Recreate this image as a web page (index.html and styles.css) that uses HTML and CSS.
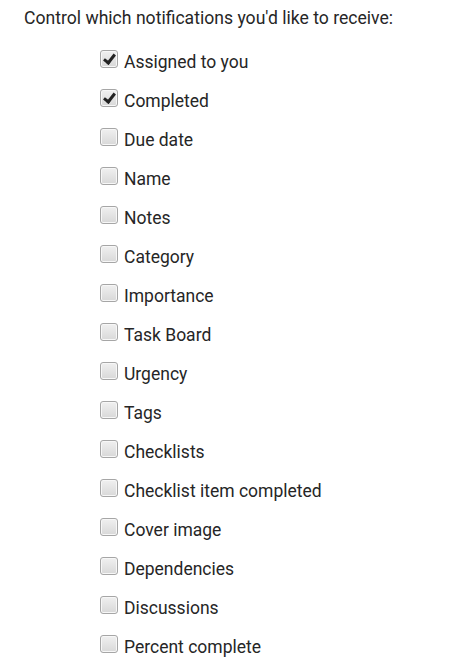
FILE: index.html
```html
<!DOCTYPE html>
<html lang="en">
<head>
    <meta charset="UTF-8">
    <meta name="viewport" content="width=device-width, initial-scale=1.0">
    <title>Notifications</title>
    <link rel="stylesheet" href="styles.css">
</head>
<body>
    <p class="intro">Control which notifications you'd like to receive:</p>
    <ul class="options">
        <li class="option"><span class="box checked"></span>Assigned to you</li>
        <li class="option"><span class="box checked"></span>Completed</li>
        <li class="option"><span class="box"></span>Due date</li>
        <li class="option"><span class="box"></span>Name</li>
        <li class="option"><span class="box"></span>Notes</li>
        <li class="option"><span class="box"></span>Category</li>
        <li class="option"><span class="box"></span>Importance</li>
        <li class="option"><span class="box"></span>Task Board</li>
        <li class="option"><span class="box"></span>Urgency</li>
        <li class="option"><span class="box"></span>Tags</li>
        <li class="option"><span class="box"></span>Checklists</li>
        <li class="option"><span class="box"></span>Checklist item completed</li>
        <li class="option"><span class="box"></span>Cover image</li>
        <li class="option"><span class="box"></span>Dependencies</li>
        <li class="option"><span class="box"></span>Discussions</li>
        <li class="option"><span class="box"></span>Percent complete</li>
    </ul>
</body>
</html>
```

FILE: styles.css
```css
body
{
    margin: 0;
    background-color: #ffffff;
    font-family: Roboto, 'Liberation Sans', sans-serif;
    color: #262626;
}
.intro
{
    margin: 0;
    padding: 6px 0 0 24px;
    height: 36px;
    font-size: 17.6px;
    line-height: 24px;
}
.options
{
    list-style: none;
    margin: 0;
    padding: 0 0 0 100px;
}
.option
{
    display: flex;
    align-items: center;
    gap: 6px;
    height: 39px;
    font-size: 17.5px;
}
.box
{
    position: relative;
    width: 16px;
    height: 16px;
    margin-top: -5px;
    border: 1px solid #a6a6a6;
    border-radius: 3px;
    background: linear-gradient(#f0f0f0, #d8d8d8);
    box-shadow: inset 0 0 0 1px #f7f7f7;
}
.checked::after
{
    content: "";
    position: absolute;
    left: 5px;
    top: 1px;
    width: 4px;
    height: 9px;
    border: solid #222222;
    border-width: 0 3px 3px 0;
    transform: rotate(38deg);
}
```
